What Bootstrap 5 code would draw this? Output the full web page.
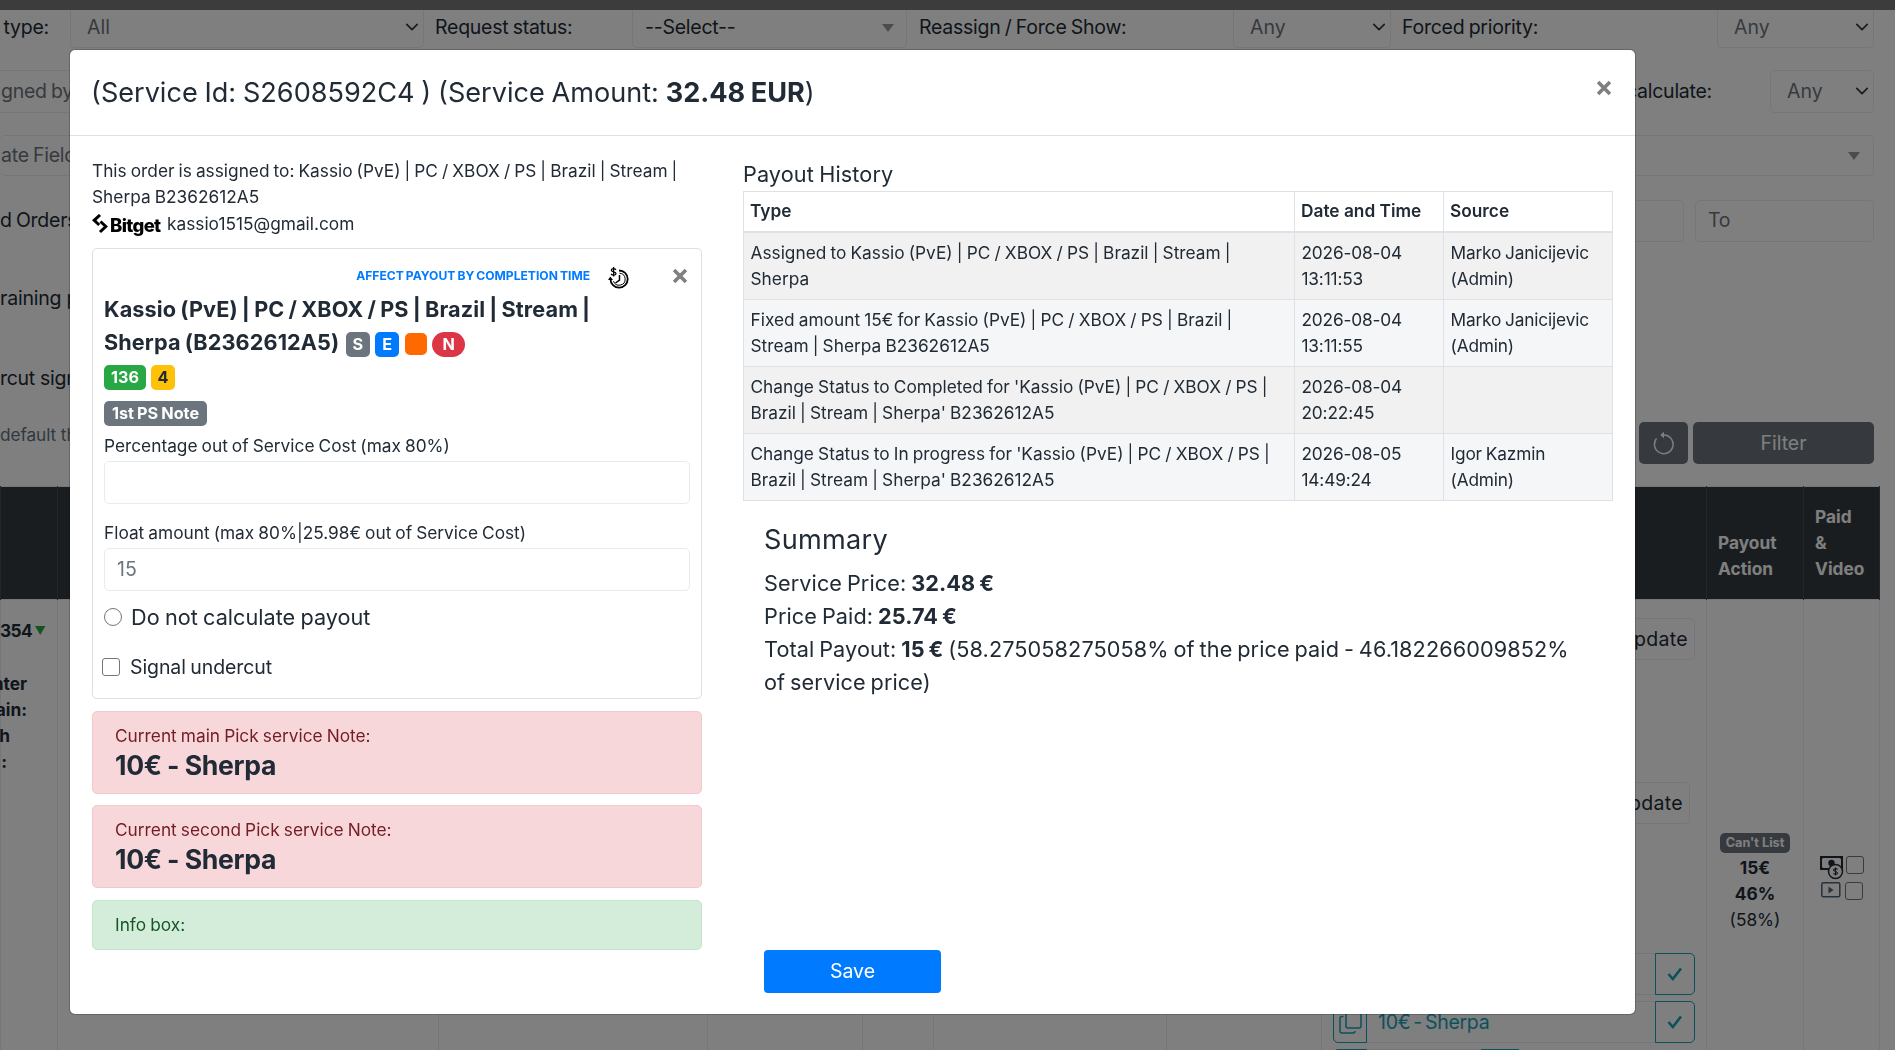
<!DOCTYPE html>
<html lang="en">
<head>
<meta charset="utf-8">
<meta name="viewport" content="width=device-width, initial-scale=1">
<title>Service payout</title>
<link href="https://cdn.jsdelivr.net/npm/bootstrap@5.3.0/dist/css/bootstrap.min.css" rel="stylesheet">
<style>
:root{--ink:#212b36;--line:#e9ecef;--grid:#dee2e6}
body{font-family:Inter,"Liberation Sans",sans-serif;font-size:19.5px;line-height:1.5;color:var(--ink);background:#fff;height:1050px;overflow:hidden}
/* page behind the dialog */
.page-view{width:1895px;height:1050px;overflow:hidden}
.page-top{height:10px;background:#787878}
.filter-line{height:42.5px;margin-bottom:22.3px;width:1874px;white-space:nowrap;letter-spacing:-.25px;word-spacing:-1px}
.filter-line.first-line{height:37.5px;margin-bottom:22.5px}
.first-line .form-select,.first-line .pick-box{border-top:0;border-top-left-radius:0;border-top-right-radius:0;padding-bottom:2px}
.form-select,.pick-box,.form-control{height:100%;font-size:19.5px;border:1px solid var(--line);border-radius:5px;color:#6c757d;background-color:#fff;line-height:1}
.form-select{padding:1px 30px 0 16px;background-size:14px 14px;background-position:right 4px center}
.first-line .form-select{background-position:right 4px top 10px}
.pick-box{display:flex;align-items:center;justify-content:space-between;padding:1px 12px 0;color:var(--ink)}
.tri{width:0;height:0;border:6.5px solid transparent;border-top:8px solid #999;border-bottom:0}
.cut{justify-content:flex-end;display:flex}
.w-lab1{width:49px}.w-sel1{width:354px}.w-lab2{width:196px}.w-sel2{width:275px}.w-lab3{width:314px}.w-sel3{width:158px}.w-lab4{width:315px}.w-sel4{width:157px}
.label-y{padding-bottom:3px}
.btn-dim{background:#6c757d;color:#fff;border-radius:5px;font-size:19.5px;height:42px}
.orders{width:1880px;table-layout:fixed;margin:0;font-size:17.3px;line-height:26px;color:var(--ink);border-color:var(--line)}
.orders th{background:#343a40;color:#fff;border-color:#454d55;height:113px;padding:13px 11px 17px;vertical-align:bottom}
.orders td{padding:0;vertical-align:top;height:480px}
.upd{height:42px;border:1px solid var(--line);border-radius:5px;padding:0 6px;display:flex;align-items:center;justify-content:flex-end;font-size:19.5px;letter-spacing:.3px;width:100px}
.pick-row{height:42.5px;margin-bottom:5.5px;border:1px solid var(--line);border-radius:5px;color:#17a2b8;font-size:19.5px;letter-spacing:-.3px;word-spacing:-2.2px}
.edge{border:1px solid #17a2b8;margin:-1px;height:42.5px;display:flex;align-items:center;justify-content:center}
.edge-l{width:34px;border-radius:5px 0 0 5px}.edge-r{width:40px;border-radius:0 5px 5px 0}
.box-c{appearance:none;margin:0;width:18px;height:18px;border:1px solid #767676;border-radius:3px;background:#fff;flex:none}
.box-r{border-radius:50%}
/* dialog */
.pay-dialog{max-width:none;width:1567px;margin:49px 0 0 69px}
.pay-dialog .modal-content{height:966px;border:1px solid rgba(0,0,0,.2);border-radius:6px;color:var(--ink)}
.pay-dialog .modal-header{height:86px;padding:0 22px;border-bottom:1px solid var(--grid);position:static}
.pay-dialog .modal-title{font-size:27.08px;font-weight:400;line-height:39px;word-spacing:-.8px;margin-left:-1px}
.pay-dialog .modal-body{padding:22px;font-size:17.3px;line-height:26px;word-spacing:-.8px}
.ex{width:16px;height:16px;display:block}
.col-pay{width:610px;flex:none}
.col-hist{width:870px;flex:none}
.bitget-mark{font-family:Inter,sans-serif;font-weight:800;font-size:18.5px;letter-spacing:-.65px;color:#000;line-height:20px;width:53px}
.worker{margin-top:11px;height:451px;border:1px solid #dfdfdf;border-radius:5px;padding:11px}
.affect{font-size:12.1px;font-weight:700;color:#007bff;line-height:18px}
.worker h5{font-size:21.67px;font-weight:700;line-height:33px;margin:0;letter-spacing:.1px;word-spacing:-1.1px;white-space:nowrap}
.tag{display:inline-block;font-size:16.25px;font-weight:700;line-height:16.5px;padding:4px 6.5px;border-radius:5px;color:#fff;height:25px;text-align:center}
.g{background:#6c757d}.b{background:#007bff}.o{background:#ff6a00}.r{background:#dc3545}.gr{background:#28a745}.y{background:#ffc107;color:var(--ink)}
.worker .form-control{height:42.5px;padding:0 12px}
.note{border:1px solid #f5c6cb;background:#f8d7da;color:#721c24;border-radius:5px;margin-top:11.5px;height:83px;padding:11px 22px}
.note strong{display:block;font-size:26.6px;line-height:33px;font-weight:700;color:var(--ink);letter-spacing:-.3px;word-spacing:-.6px}
.info{border-color:#c3e6cb;background:#d4edda;color:#155724;height:50px}
.hist-title{font-size:21.67px;line-height:33px;margin-top:0;letter-spacing:.1px}
.hist{margin:0;font-size:17.3px;line-height:26px;border-color:var(--grid);table-layout:fixed;color:var(--ink)}
.hist>:not(caption)>*>*{padding:7px 6px;color:var(--ink);box-shadow:none;background:transparent;white-space:nowrap}
.hist>thead>tr>th{border-bottom:2px solid var(--grid);font-weight:600;padding-top:6px;word-spacing:0}
.hist td:first-child{word-spacing:-.7px;padding-left:6.5px!important}.hist td+td{letter-spacing:-.17px;padding-left:6.5px!important}
.hist tbody tr{background:#f4f6f8}.hist tbody tr:nth-child(odd){background:#f1f1f1}
.sum{padding:22px 21px 0 21px;font-size:21.67px;line-height:33px;word-spacing:-1.3px;letter-spacing:.09px}
.sum h4{font-size:27.08px;font-weight:400;line-height:33px;margin:0 0 11px;letter-spacing:.3px}
.save{width:177px;height:43px;background:#007bff;color:#fff;border-radius:4px;font-size:19.5px;line-height:1}
b,strong{font-weight:700}
</style>
</head>
<body>
<div class="page-view">
  <div class="page-top"></div>
  <div class="filter-line first-line d-flex">
    <div class="w-lab1 cut align-items-center label-y">type:</div>
    <div class="w-sel1" style="margin-left:21px"><select class="form-select"><option>All</option></select></div>
    <div class="w-lab2 d-flex align-items-center label-y" style="padding-left:11px">Request status:</div>
    <div class="w-sel2 pick-box" style="margin-left:12px"><span>--Select--</span><i class="tri"></i></div>
    <div class="w-lab3 d-flex align-items-center label-y" style="margin-left:12px">Reassign / Force Show:</div>
    <div class="w-sel3"><select class="form-select"><option>Any</option></select></div>
    <div class="w-lab4 d-flex align-items-center label-y" style="margin-left:11px">Forced priority:</div>
    <div class="w-sel4"><select class="form-select"><option>Any</option></select></div>
  </div>
  <div class="filter-line d-flex justify-content-between">
    <div class="pick-box border-start-0 rounded-0 text-secondary" style="width:424px;padding-left:1px">gned by</div>
    <div class="d-flex align-items-center"><span style="margin-right:58px">Do not calculate:</span><div style="width:104px;height:100%"><select class="form-select"><option>Any</option></select></div></div>
  </div>
  <div class="filter-line"><div class="pick-box border-start-0 text-secondary" style="height:41.5px;padding-left:1px;padding-right:13px">ate Field<i class="tri"></i></div></div>
  <div class="filter-line d-flex align-items-center justify-content-end">
    <div style="width:90px">d Orders</div>
    <div class="ms-auto form-control" style="width:180px"></div>
    <div class="form-control d-flex align-items-center" style="width:179px;margin-left:11px">To</div>
  </div>
  <div style="height:79px;line-height:69px;letter-spacing:-.2px" class="text-nowrap">raining p</div>
  <div style="height:79px;line-height:70px;letter-spacing:-.3px" class="text-nowrap">rcut sign</div>
  <div class="d-flex align-items-center" style="width:1874px;height:42px">
    <span style="font-size:17.3px;color:#637381;padding-bottom:16px;letter-spacing:-.1px">default th</span>
    <button class="btn btn-dim ms-auto p-0 d-flex align-items-center justify-content-center" style="width:49px"><svg width="24" height="24" viewBox="0 0 24 24" fill="none" stroke="#fff" stroke-width="1.5"><path d="M4.500 7.500A9.300 9.300 0 1 0 12 4H9.500"/><path d="M12 .8 8.300 4 12 7.200z" fill="#fff" stroke="none"/></svg></button>
    <button class="btn btn-dim p-0" style="width:181px;margin-left:5px">Filter</button>
  </div>
  <table class="table table-bordered orders" style="margin-top:21.5px">
    <colgroup><col style="width:57px"><col style="width:381px"><col style="width:269px"><col style="width:155px"><col style="width:71px"><col style="width:233px"><col style="width:155px"><col style="width:385px"><col style="width:97px"><col></colgroup>
    <thead><tr><th></th><th></th><th></th><th></th><th></th><th></th><th></th><th></th><th>Payout Action</th><th>Paid<br>&amp;<br>Video</th></tr></thead>
    <tbody><tr>
      <td class="fw-bold"><div style="padding-top:18px;width:45px" class="cut align-items-center"><span style="letter-spacing:-.6px">354</span><svg width="11" height="9" viewBox="0 0 11 9" class="flex-shrink-0" style="margin-left:3px"><path d="M0 0h10.500L5.200 9z" fill="#28a745"/></svg></div>
        <div class="cut" style="width:26px;margin-top:27px">nter</div><div class="cut" style="width:26px">ain:</div><div class="cut" style="width:9px"><span>h</span></div><div class="cut" style="width:6px">:</div></td>
      <td></td><td></td><td></td><td></td><td></td><td></td>
      <td style="padding:18px 11px 0 11px">
        <div class="upd ms-auto">Update</div>
        <div class="upd ms-auto" style="margin-top:122px;margin-right:5px">Update</div>
        <div class="pick-row d-flex justify-content-end" style="margin-top:129px"><div class="edge edge-r"><svg width="16" height="14" viewBox="0 0 16 14"><path d="m1.500 7 4.300 5L14 1.500" fill="none" stroke="#17a2b8" stroke-width="2.600"/></svg></div></div>
        <div class="pick-row d-flex align-items-center"><div class="edge edge-l"><svg width="23" height="23" viewBox="0 0 23 23" fill="none" stroke="#17a2b8" stroke-width="1.500"><rect x="7" y="1" width="15" height="16" rx="2"/><path d="M4.500 5.500H3a2 2 0 0 0-2 2V20a2 2 0 0 0 2 2h11a2 2 0 0 0 2-2"/></svg></div><span style="margin-left:12px">10€ - Sherpa</span><div class="edge edge-r ms-auto"><svg width="16" height="14" viewBox="0 0 16 14"><path d="m1.500 7 4.300 5L14 1.500" fill="none" stroke="#17a2b8" stroke-width="2.600"/></svg></div></div>
        <div class="pick-row d-flex" style="width:186px"><div class="edge edge-l"></div><div class="edge ms-auto" style="width:38px"></div></div>
      </td>
      <td class="text-center fw-bold" style="padding-top:233px"><span class="tag g text-nowrap" style="font-size:12.700px;line-height:13px;padding:3px 0;height:20px;display:block;width:70px;margin:0 auto 2px">Can't List</span>15€<br>46%<br><span class="fw-normal">(58%)</span></td>
      <td style="padding:256px 0 0 16px">
        <div class="d-flex align-items-start" style="height:26px"><svg width="24" height="24" viewBox="0 0 24 24"><path d="M1 1h21v12H1z" fill="none" stroke="#212b36" stroke-width="2"/><path d="M0 0h5L0 5zM23 0h-5l5 5zM0 14v-5l5 5z" fill="#212b36"/><circle cx="11.500" cy="7" r="3.200" fill="#212b36"/><circle cx="15.500" cy="15.500" r="7" fill="#fff" stroke="#212b36" stroke-width="1.500"/><path d="M17.500 13.500c-1-1.300-4-1-4 .5s4 1.500 4 3-3 1.800-4 .4M15.500 11.500v8" fill="none" stroke="#212b36" stroke-width="1.100"/></svg><input type="checkbox" class="box-c" style="margin-left:2px"></div>
        <div class="d-flex align-items-start" style="padding-left:1px"><svg width="20" height="16" viewBox="0 0 20 16"><rect x=".8" y=".8" width="18" height="14" rx="1.500" fill="none" stroke="#4f6273" stroke-width="1.500"/><path d="M7.500 4.500v7l5-3.500z" fill="#4f6273"/></svg><input type="checkbox" class="box-c" style="margin-left:4px"></div>
      </td>
    </tr></tbody>
  </table>
</div>

<div class="modal-backdrop show"></div>
<div class="modal d-block show overflow-hidden" tabindex="-1">
  <div class="modal-dialog pay-dialog">
    <div class="modal-content">
      <div class="modal-header">
        <h4 class="modal-title">(Service Id: S2608592C4 ) (Service Amount: <b>32.48 EUR</b>)</h4>
        <span style="padding:0 1px 9px 0"><svg class="ex" viewBox="0 0 14 14"><path d="m1.800 1.800 10.400 10.400m0-10.400-10.400 10.400" stroke="#808080" stroke-width="3.200"/></svg></span>
      </div>
      <div class="modal-body d-flex justify-content-between">
        <div class="col-pay">
          <div>This order is assigned to: Kassio (PvE) | PC / XBOX / PS | Brazil | Stream | Sherpa B2362612A5</div>
          <div class="d-flex align-items-center" style="height:27px"><svg width="16" height="20" viewBox="0 0 16 20" style="margin-right:2px"><path d="M8 1 2.200 6.300l5 4.700M8.500 7.500l5.300 5-5.800 5.500" fill="none" stroke="#000" stroke-width="3"/></svg><span class="bitget-mark" style="padding-top:2px">Bitget</span><span style="margin-left:4px">kassio1515@gmail.com</span></div>
          <div class="worker">
            <div class="d-flex align-items-center justify-content-end" style="height:33px;padding-bottom:1px"><span class="affect">AFFECT PAYOUT BY COMPLETION TIME</span>
              <svg width="21" height="23" viewBox="0 0 21 23" style="margin-left:18px;margin-top:4px"><g fill="none" stroke="#000"><path d="M11 3.500A8.600 8.600 0 1 1 2.500 12" stroke-width="1.800"/><path d="M11.500 6.200a6 6 0 1 1-6 8" stroke-width="1"/><path d="M11.500 8v5l-4 3" stroke-width="1.500"/><path d="M8 2.800C6.500 1 3.200 1.300 3.300 3.200s4.700 1.300 4.700 3.300S4.500 8.700 3 7M5.600 0v9.500" stroke-width="1.300"/></g><path d="M0 13h5L2.300 9.500z"/></svg>
              <svg class="ex" viewBox="0 0 14 14" style="margin:0 2px 0 43px"><path d="m1.800 1.800 10.400 10.400m0-10.400-10.400 10.400" stroke="#808080" stroke-width="3.200"/></svg></div>
            <h5>Kassio (PvE) | PC / XBOX / PS | Brazil | Stream |</h5>
            <div class="d-flex align-items-center" style="height:33px"><h5>Sherpa (B2362612A5)</h5><div class="d-flex align-items-center ms-auto" style="width:344px;gap:5.500px;padding-top:3px"><span class="tag g">S</span><span class="tag b" style="width:24px">E</span><span class="tag o" style="width:22px;height:22px"></span><span class="tag r rounded-pill" style="width:33px">N</span></div></div>
            <div class="d-flex" style="gap:5px;margin-top:6px"><span class="tag gr" style="width:42px">136</span><span class="tag y">4</span></div>
            <div style="margin-top:11px;height:25px" class="d-flex"><span class="tag g text-nowrap" style="width:103px">1st PS Note</span></div>
            <div style="margin-top:7px">Percentage out of Service Cost (max 80%)</div>
            <input class="form-control" style="margin-top:2px">
            <div style="margin-top:16.500px">Float amount (max 80%|25.98€ out of Service Cost)</div>
            <input class="form-control" style="margin-top:2px" value="15">
            <div class="d-flex align-items-center" style="height:33px;margin-top:10px;font-size:21.670px"><input type="radio" class="box-c box-r"><span style="margin-left:9px">Do not calculate payout</span></div>
            <div class="d-flex align-items-center" style="height:30px;margin-top:18px;font-size:19.500px;margin-left:-2px"><input type="checkbox" class="box-c"><span style="margin-left:10px;letter-spacing:-.1px">Signal undercut</span></div>
          </div>
          <div class="note">Current main Pick service Note:<strong>10€ - Sherpa</strong></div>
          <div class="note">Current second Pick service Note:<strong>10€ - Sherpa</strong></div>
          <div class="note info">Info box:</div>
        </div>
        <div class="col-hist d-flex flex-column" style="height:835px">
          <div class="hist-title">Payout History</div>
          <table class="table table-bordered hist">
            <colgroup><col style="width:551px"><col style="width:149px"><col></colgroup>
            <thead><tr><th>Type</th><th>Date and Time</th><th>Source</th></tr></thead>
            <tbody>
              <tr><td>Assigned to Kassio (PvE) | PC / XBOX / PS | Brazil | Stream |<br>Sherpa</td><td>2026-08-04<br>13:11:53</td><td>Marko Janicijevic<br>(Admin)</td></tr>
              <tr><td>Fixed amount 15€ for Kassio (PvE) | PC / XBOX / PS | Brazil |<br>Stream | Sherpa B2362612A5</td><td>2026-08-04<br>13:11:55</td><td>Marko Janicijevic<br>(Admin)</td></tr>
              <tr><td>Change Status to Completed for 'Kassio (PvE) | PC / XBOX / PS |<br>Brazil | Stream | Sherpa' B2362612A5</td><td>2026-08-04<br>20:22:45</td><td></td></tr>
              <tr><td>Change Status to In progress for 'Kassio (PvE) | PC / XBOX / PS |<br>Brazil | Stream | Sherpa' B2362612A5</td><td>2026-08-05<br>14:49:24</td><td>Igor Kazmin<br>(Admin)</td></tr>
            </tbody>
          </table>
          <div class="sum"><h4>Summary</h4>
            <div>Service Price: <b>32.48 €</b></div><div>Price Paid: <b>25.74 €</b></div>
            <div>Total Payout: <b>15 €</b> (58.275058275058% of the price paid - 46.182266009852%<br>of service price)</div>
          </div>
          <div class="mt-auto" style="padding-left:21px"><button class="btn save">Save</button></div>
        </div>
      </div>
    </div>
  </div>
</div>
<script src="https://cdn.jsdelivr.net/npm/bootstrap@5.3.0/dist/js/bootstrap.bundle.min.js"></script>
</body>
</html>
